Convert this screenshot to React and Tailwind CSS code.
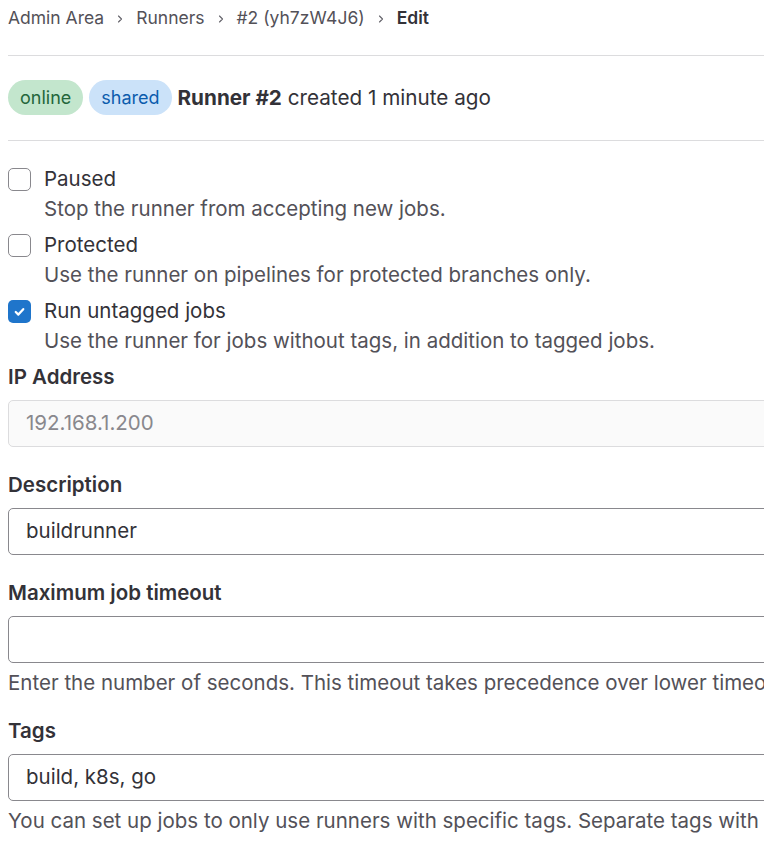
import React from "react";

function Chevron() {
  return (
    <svg width="12" height="12" viewBox="0 0 16 16" className="mx-[10px] text-[#626168]" fill="none">
      <path d="M6 4l4 4-4 4" stroke="currentColor" strokeWidth="1.5" strokeLinecap="round" strokeLinejoin="round" />
    </svg>
  );
}

function Option({ checked, label, desc }) {
  return (
    <div className="flex mb-[6px]">
      <div className="w-[36px] shrink-0 pt-[4px]">
        {checked ? (
          <div className="w-[23px] h-[23px] rounded-[5px] bg-[#1f75cb] flex items-center justify-center">
            <svg width="15" height="15" viewBox="0 0 16 16" fill="none">
              <path d="M4 8.5l2.8 2.8L12 5.5" stroke="white" strokeWidth="2.4" strokeLinecap="round" strokeLinejoin="round" />
            </svg>
          </div>
        ) : (
          <div className="w-[23px] h-[23px] rounded-[5px] border border-[#89888d] bg-white" />
        )}
      </div>
      <div>
        <div className="leading-[30px] text-[20.5px] text-[#333238]">{label}</div>
        <div className="leading-[30px] text-[20.5px] text-[#535158] whitespace-nowrap">{desc}</div>
      </div>
    </div>
  );
}

function Label({ children }) {
  return <div className="leading-[30px] text-[20.5px] font-semibold text-[#333238] mb-[8px]">{children}</div>;
}

function Input({ value, disabled }) {
  return (
    <div
      className={
        "w-[900px] h-[47px] rounded-[5px] border flex items-center pl-[17px] text-[20.5px] " +
        (disabled ? "bg-[#fafafa] border-[#dcdcde] text-[#89888d]" : "bg-white border-[#89888d] text-[#333238]")
      }
    >
      {value}
    </div>
  );
}

export default function App() {
  return (
    <div className="w-[764px] h-[846px] overflow-hidden bg-white pl-2 font-['Inter',sans-serif] text-[#333238]">
      <div className="h-[56px] border-b border-[#dcdcde]">
        <div className="h-[37px] flex items-center text-[17.5px] text-[#535158] whitespace-nowrap">
          <span>Admin Area</span>
          <Chevron />
          <span>Runners</span>
          <Chevron />
          <span>#2 (yh7zW4J6)</span>
          <Chevron />
          <span className="font-semibold text-[#333238]">Edit</span>
        </div>
      </div>
      <div className="pt-[24px] pb-[25px] border-b border-[#dcdcde]">
        <div className="h-[35px] flex items-center">
          <span className="h-[35px] px-[12px] rounded-full bg-[#c3e6cd] text-[#24663b] text-[18px] flex items-center">online</span>
          <span className="ml-[6px] h-[35px] px-[12px] rounded-full bg-[#cbe2f9] text-[#0b5cad] text-[18px] flex items-center">shared</span>
          <span className="ml-[6px] text-[20.7px] whitespace-nowrap">
            <span className="font-bold">Runner #2</span> created 1 minute ago
          </span>
        </div>
      </div>
      <div className="pt-[23px]">
        <Option label="Paused" desc="Stop the runner from accepting new jobs." />
        <Option label="Protected" desc="Use the runner on pipelines for protected branches only." />
        <Option checked label="Run untagged jobs" desc="Use the runner for jobs without tags, in addition to tagged jobs." />
      </div>
      <div>
        <Label>IP Address</Label>
        <Input disabled value="192.168.1.200" />
        <div className="h-[23px]" />
        <Label>Description</Label>
        <Input value="buildrunner" />
        <div className="h-[23px]" />
        <Label>Maximum job timeout</Label>
        <Input value="" />
        <div className="mt-[5px] leading-[30px] text-[20.5px] text-[#535158] whitespace-nowrap">
          Enter the number of seconds. This timeout takes precedence over lower timeouts set for the project.
        </div>
        <div className="h-[18px]" />
        <Label>Tags</Label>
        <Input value="build, k8s, go" />
        <div className="mt-[5px] leading-[30px] text-[20.5px] text-[#535158] whitespace-nowrap">
          You can set up jobs to only use runners with specific tags. Separate tags with commas.
        </div>
      </div>
    </div>
  );
}
